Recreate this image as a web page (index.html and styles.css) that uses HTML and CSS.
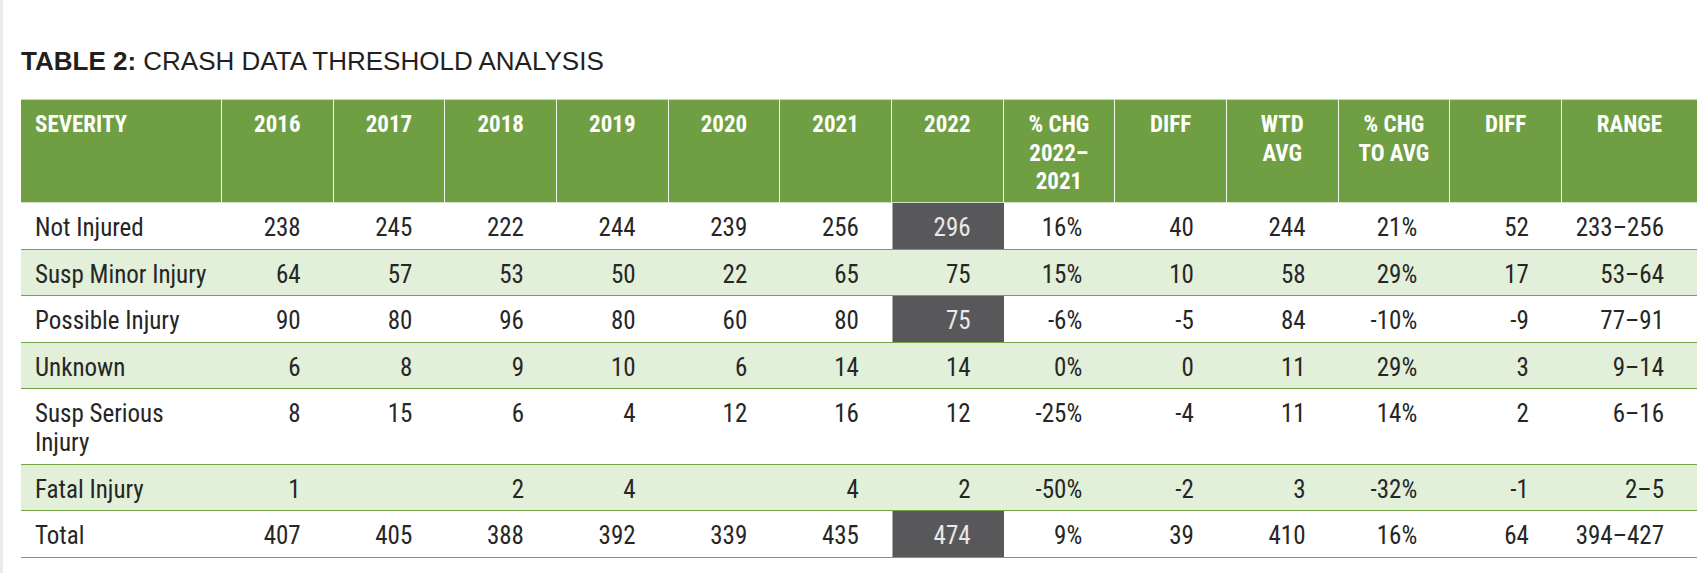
FILE: index.html
```html
<!DOCTYPE html>
<html lang="en">
<head>
<meta charset="utf-8">
<title>Table 2: Crash Data Threshold Analysis</title>
<link rel="stylesheet" href="styles.css">
</head>
<body>
<div class="page">
  <h1 class="title"><strong>TABLE 2:</strong> CRASH DATA THRESHOLD ANALYSIS</h1>
  <table class="crash">
    <colgroup>
      <col class="c-sev">
      <col class="c-num"><col class="c-num"><col class="c-num"><col class="c-num"><col class="c-num"><col class="c-num">
      <col class="c-num"><col class="c-num"><col class="c-num"><col class="c-num"><col class="c-num"><col class="c-num">
      <col class="c-range">
    </colgroup>
    <thead>
      <tr>
        <th class="left">SEVERITY</th>
        <th>2016</th><th>2017</th><th>2018</th><th>2019</th><th>2020</th><th>2021</th><th>2022</th>
        <th>% CHG<br>2022–<br>2021</th>
        <th>DIFF</th>
        <th>WTD<br>AVG</th>
        <th>% CHG<br>TO AVG</th>
        <th>DIFF</th>
        <th>RANGE</th>
      </tr>
    </thead>
    <tbody>
      <tr>
        <td class="left">Not Injured</td>
        <td>238</td><td>245</td><td>222</td><td>244</td><td>239</td><td>256</td><td class="dark">296</td>
        <td>16%</td><td>40</td><td>244</td><td>21%</td><td>52</td><td>233–256</td>
      </tr>
      <tr class="alt">
        <td class="left">Susp Minor Injury</td>
        <td>64</td><td>57</td><td>53</td><td>50</td><td>22</td><td>65</td><td>75</td>
        <td>15%</td><td>10</td><td>58</td><td>29%</td><td>17</td><td>53–64</td>
      </tr>
      <tr>
        <td class="left">Possible Injury</td>
        <td>90</td><td>80</td><td>96</td><td>80</td><td>60</td><td>80</td><td class="dark">75</td>
        <td>-6%</td><td>-5</td><td>84</td><td>-10%</td><td>-9</td><td>77–91</td>
      </tr>
      <tr class="alt">
        <td class="left">Unknown</td>
        <td>6</td><td>8</td><td>9</td><td>10</td><td>6</td><td>14</td><td>14</td>
        <td>0%</td><td>0</td><td>11</td><td>29%</td><td>3</td><td>9–14</td>
      </tr>
      <tr>
        <td class="left">Susp Serious<br>Injury</td>
        <td>8</td><td>15</td><td>6</td><td>4</td><td>12</td><td>16</td><td>12</td>
        <td>-25%</td><td>-4</td><td>11</td><td>14%</td><td>2</td><td>6–16</td>
      </tr>
      <tr class="alt">
        <td class="left">Fatal Injury</td>
        <td>1</td><td></td><td>2</td><td>4</td><td></td><td>4</td><td>2</td>
        <td>-50%</td><td>-2</td><td>3</td><td>-32%</td><td>-1</td><td>2–5</td>
      </tr>
      <tr>
        <td class="left">Total</td>
        <td>407</td><td>405</td><td>388</td><td>392</td><td>339</td><td>435</td><td class="dark">474</td>
        <td>9%</td><td>39</td><td>410</td><td>16%</td><td>64</td><td>394–427</td>
      </tr>
    </tbody>
  </table>
</div>
</body>
</html>
```
FILE: styles.css
```css
html, body {
  margin: 0;
  padding: 0;
  background: #ffffff;
}

.page {
  border-left: 3px solid #ebebeb;
  min-height: 573px;
  padding: 46px 0 0 18px;
  box-sizing: border-box;
}

.title {
  margin: 0 0 23px 0;
  font-family: "Liberation Sans", Arial, sans-serif;
  font-size: 26px;
  line-height: 30px;
  font-weight: normal;
  color: #231f20;
}

.title strong {
  font-weight: bold;
}

.crash {
  width: 1676px;
  table-layout: fixed;
  border-collapse: separate;
  border-spacing: 0;
  font-family: "Roboto", sans-serif;
  font-stretch: condensed;
  color: #262626;
}

.c-sev { width: 201px; }
.c-num { width: 111.67px; }
.c-range { width: 135px; }

.crash th {
  background: #6f9f42;
  color: #ffffff;
  font-weight: bold;
  font-size: 23px;
  line-height: 28.5px;
  text-align: center;
  vertical-align: top;
  padding: 11px 4px 5.5px 4px;
  border-right: 1px solid #f1f5ec;
  border-top: 1px solid #c6d6b8;
  border-bottom: 1px solid #d3ddca;
}

.crash th:last-child {
  border-right: none;
}

.crash th.left {
  text-align: left;
  padding-left: 14px;
}

.crash td {
  font-size: 25px;
  line-height: 29px;
  text-align: right;
  vertical-align: top;
  padding: 10px 33px 6.5px 4px;
  border-bottom: 1px solid #73a545;
}

.crash td.left {
  text-align: left;
  padding-left: 14px;
  padding-right: 6px;
}

.crash tr.alt td {
  background: #e2efd9;
}

.crash td.dark {
  background: #58585a;
  color: #e9e9e9;
  box-shadow: inset 1px 0 0 #a8a8a8;
}
```
